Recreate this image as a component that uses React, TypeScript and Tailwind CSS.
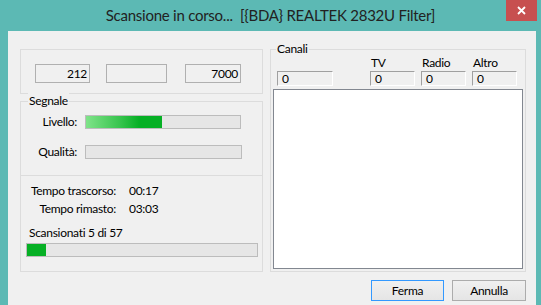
import React from "react";

const groupBorder = "border border-[#dcdcdc]";

function ReadBox({ value, width }: { value: string; width: string }) {
	return (
		<div
			className={`${width} h-[19px] border border-[#b0b0b0] bg-[#f0f0f0] pr-[2px] text-right leading-[17px]`}
		>
			{value}
		</div>
	);
}

function CountBox({ width }: { width: string }) {
	return (
		<div
			className={`${width} h-[15px] border border-t-[#a0a0a0] border-l-[#a0a0a0] border-r-white border-b-white pl-[4px] leading-[13px]`}
		>
			0
		</div>
	);
}

function Bar({ width, fill, gradient }: { width: string; fill: number; gradient?: boolean }) {
	return (
		<div className={`${width} h-[14px] border border-[#bcbcbc] bg-[#e6e6e6]`}>
			{fill > 0 && (
				<div
					className={
						gradient
							? "h-full bg-[linear-gradient(to_right,#7fe389,#37c44d_45%,#06b025_70%)]"
							: "h-full bg-[#06b025]"
					}
					style={{ width: fill }}
				/>
			)}
		</div>
	);
}

export default function App() {
	return (
		<div className="w-[541px] h-[305px] overflow-hidden bg-[#5cb9b4] flex flex-col whitespace-nowrap font-['Lato',sans-serif] text-[12px] tracking-[-0.3px] text-black">
			{/* title bar */}
			<div className="relative h-[31px] shrink-0 text-center text-[15px] tracking-[-0.25px] leading-[30px] text-[#222]">
				Scansione in corso...&nbsp; [{"{"}BDA{"}"} REALTEK 2832U Filter]
				<div className="absolute right-[4px] top-0 w-[31px] h-[21px] bg-[#c75050] flex items-center justify-center">
					<svg width="9" height="9" viewBox="0 0 9 9">
						<path d="M1 1 L8 8 M8 1 L1 8" stroke="white" strokeWidth="1.8" />
					</svg>
				</div>
			</div>

			{/* client area */}
			<div className="ml-[8px] w-[528px] flex-1 bg-[#f0f0f0] pl-[12px] pt-[18px]">
				<div className="flex gap-[7px]">
					{/* left column */}
					<div className="w-[243px] flex flex-col">
						<div className={`${groupBorder} h-[45px] flex pt-[14px] pl-[14px]`}>
							<ReadBox value="212" width="w-[55px]" />
							<div className="ml-[16px]">
								<ReadBox value="" width="w-[61px]" />
							</div>
							<div className="ml-[18px]">
								<ReadBox value="7000" width="w-[56px]" />
							</div>
						</div>

						<div className={`${groupBorder} relative mt-[7px] h-[75px] pt-[13px] leading-[14px]`}>
							<span className="absolute left-[7px] top-[-9px] bg-[#f0f0f0] px-[1px] leading-[16px]">
								Segnale
							</span>
							<div className="flex items-center">
								<div className="w-[56px] text-right">Livello:</div>
								<div className="ml-[8px]">
									<Bar width="w-[156px]" fill={76} gradient />
								</div>
							</div>
							<div className="flex items-center mt-[16px]">
								<div className="w-[56px] text-right">Qualità:</div>
								<div className="ml-[8px]">
									<Bar width="w-[157px]" fill={0} />
								</div>
							</div>
						</div>

						<div className={`${groupBorder} border-t-0 h-[96px] pt-[6px] leading-[18px]`}>
							<div className="flex">
								<div className="w-[95px] text-right">Tempo trascorso:</div>
								<div className="ml-[13px]">00:17</div>
							</div>
							<div className="flex">
								<div className="w-[95px] text-right">Tempo rimasto:</div>
								<div className="ml-[13px]">03:03</div>
							</div>
							<div className="mt-[6px] pl-[8px]">Scansionati 5 di 57</div>
							<div className="mt-[1px] ml-[5px]">
								<Bar width="w-[232px]" fill={19} />
							</div>
						</div>
					</div>

					{/* right column */}
					<div className="w-[256px] flex flex-col">
						<div className={`${groupBorder} relative h-[223px] pt-[6px] pl-[6px]`}>
							<span className="absolute left-[5px] top-[-9px] bg-[#f0f0f0] px-[1px] leading-[16px]">
								Canali
							</span>
							<div className="flex items-end">
								<div className="flex flex-col">
									<div className="h-[14px]" />
									<div className="mt-[1px]">
										<CountBox width="w-[56px]" />
									</div>
								</div>
								<div className="flex flex-col ml-[37px]">
									<div className="h-[14px] leading-[14px] pl-[1px]">TV</div>
									<div className="mt-[1px]">
										<CountBox width="w-[45px]" />
									</div>
								</div>
								<div className="flex flex-col ml-[6px]">
									<div className="h-[14px] leading-[14px] pl-[1px]">Radio</div>
									<div className="mt-[1px]">
										<CountBox width="w-[45px]" />
									</div>
								</div>
								<div className="flex flex-col ml-[6px]">
									<div className="h-[14px] leading-[14px] pl-[1px]">Altro</div>
									<div className="mt-[1px]">
										<CountBox width="w-[45px]" />
									</div>
								</div>
							</div>
							<div className="mt-[3px] ml-[-4px] w-[250px] h-[180px] border border-[#828790] bg-white" />
						</div>

						<div className="mt-[8px] flex justify-end gap-[8px]">
							<button className="w-[73px] h-[21px] border border-[#3399ff] bg-[linear-gradient(#f0f0f0,#e5e5e5)] leading-[19px]">
								Ferma
							</button>
							<button className="w-[74px] h-[21px] border border-[#acacac] bg-[linear-gradient(#f0f0f0,#e5e5e5)] leading-[19px]">
								Annulla
							</button>
						</div>
					</div>
				</div>
			</div>
		</div>
	);
}
